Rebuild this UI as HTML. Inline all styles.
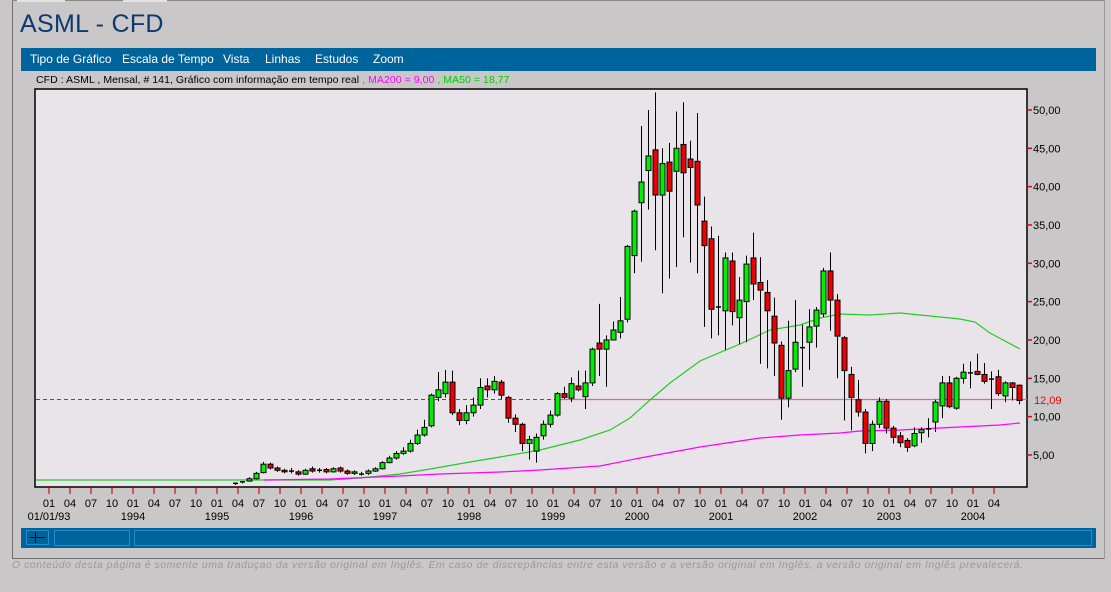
<!DOCTYPE html>
<html><head><meta charset="utf-8">
<style>
html,body{margin:0;padding:0;}
body{width:1111px;height:592px;background:#c9c7c7;position:relative;overflow:hidden;font-family:"Liberation Sans",sans-serif;}
.abs{position:absolute;}
#title{left:20px;top:10px;font-size:25px;color:#0d3a6e;letter-spacing:0.3px;}
#menu{left:21px;top:48px;width:1075px;height:23px;background:#00649c;}
#menu span{position:absolute;top:4px;color:#fff;font-size:12px;}
#info{left:36px;top:74px;font-size:10.5px;color:#000;white-space:nowrap;letter-spacing:0.05px;}
#foot{left:12px;top:559px;font-size:10.5px;color:#9a9898;font-style:italic;white-space:nowrap;letter-spacing:0.52px;}
</style></head><body>
<div class="abs" style="left:12px;top:0;width:1px;height:558px;background:#6e6e6e"></div>
<div class="abs" style="left:12px;top:558px;width:1092px;height:1px;background:#6e6e6e"></div>
<div class="abs" style="left:1104px;top:0;width:1px;height:559px;background:#9a9a9a"></div>
<div class="abs" style="left:12px;top:0;width:1092px;height:1px;background:#8a8a8a"></div>
<div class="abs" style="left:17px;top:0;width:48px;height:2px;background:#e4e4e4"></div>
<div class="abs" style="left:123px;top:0;width:44px;height:2px;background:#e4e4e4"></div>
<div id="title" class="abs">ASML - CFD</div>
<div id="menu" class="abs">
<span style="left:9px">Tipo de Gráfico</span>
<span style="left:101px">Escala de Tempo</span>
<span style="left:202px">Vista</span>
<span style="left:244px">Linhas</span>
<span style="left:294px">Estudos</span>
<span style="left:352px">Zoom</span>
</div>
<div id="info" class="abs">CFD : ASML , Mensal, # 141, Gráfico com informação em tempo real <span style="color:#ff00ff">, MA200 = 9,00</span> <span style="color:#00cc00">, MA50 = 18,77</span></div>
<svg class="abs" style="left:0;top:0" width="1111" height="592" id="svg" font-family="Liberation Sans, sans-serif"></svg>
<div class="abs" style="left:21px;top:528px;width:1075px;height:20px;background:#00649c"></div>
<div class="abs" style="left:26px;top:530px;width:23px;height:15px;border:1px solid #2a8ad0;box-sizing:border-box"></div>
<div class="abs" style="left:30px;top:537px;width:15px;height:1px;background:#000"></div>
<div class="abs" style="left:35px;top:532px;width:1px;height:11px;background:#000"></div>
<div class="abs" style="left:54px;top:530px;width:76px;height:16px;border:1px solid #2a8ad0;box-sizing:border-box"></div>
<div class="abs" style="left:134px;top:530px;width:958px;height:16px;border:1px solid #2a8ad0;box-sizing:border-box"></div>
<div id="foot" class="abs">O conteúdo desta página é somente uma traduçao da versão original em Inglês. Em caso de discrepâncias entre esta versão e a versão original em Inglês, a versão original em Inglês prevalecerá.</div>
<script>
var s='';
function Y(v){return 493.3-7.667*v;}
s+='<rect x="35" y="89" width="992" height="398" fill="#e9e4e9" stroke="#000" stroke-width="1.5"/>';
[5,10,15,20,25,30,35,40,45,50].forEach(function(v){var y=Y(v);
s+='<line x1="1027" x2="1032" y1="'+y+'" y2="'+y+'" stroke="#e00" stroke-width="1.5"/>';
s+='<text x="1033" y="'+(y+4)+'" font-size="11" fill="#000">'+v+',00</text>';});
var mm=['01','04','07','10'];
for(var j=0;j<=45;j++){var x=49+21*j;
s+='<line x1="'+x+'" x2="'+x+'" y1="488" y2="494" stroke="#e00" stroke-width="1.2"/>';
s+='<text x="'+x+'" y="507" font-size="11" text-anchor="middle">'+mm[j%4]+'</text>';
if(j%4==0){var yr=1993+j/4;s+='<text x="'+x+'" y="520" font-size="11" text-anchor="middle">'+(j==0?'01/01/93':yr)+'</text>';}}
s+='<line x1="36" x2="560" y1="399.5" y2="399.5" stroke="#555" stroke-dasharray="4,3"/>';
s+='<line x1="560" x2="1027" y1="399.5" y2="399.5" stroke="#e8609a" stroke-width="1.2"/>';
s+='<text x="1034" y="404" font-size="11" fill="#e00">12,09</text>';
function pl(pts,c){var p=pts.map(function(a){return a[0]+','+a[1]}).join(' ');s+='<polyline points="'+p+'" fill="none" stroke="'+c+'" stroke-width="1.2"/>';}
pl([[36,480],[330,480],[360,478],[400,474],[430,469],[470,462],[500,457],[540,450],[580,440],[610,430],[630,418],[650,400],[670,383],[700,361],[740,344],[770,330],[800,325],[820,318],[840,314],[870,315],[900,313],[930,316],[960,319],[975,322],[990,333],[1005,341],[1020,349]],'#22cc22');
pl([[264,480],[330,479],[400,476],[440,474],[500,472],[540,470],[600,466],[640,458],[700,447],[760,438],[800,435],[840,433],[860,431],[900,430],[940,428],[980,426],[1000,425],[1020,423]],'#ff00ff');
var pre=[[1.2,1.3,1.4,1.1],[1.4,1.5,1.6,1.3],[1.6,1.9,2.1,1.5],[1.9,2.6,2.8,1.8],[2.7,3.8,4.1,2.6],[3.8,3.3,4,3.1],[3.3,3.0,3.5,2.8],[3.0,2.8,3.2,2.6],[2.9,2.8,3.3,2.6],[2.8,2.5,3,2.3],[2.5,3.0,3.2,2.4],[3.2,2.9,3.5,2.7],[3.0,3.0,3.3,2.7],[3.1,2.8,3.3,2.6],[2.8,3.2,3.4,2.7],[3.3,2.9,3.5,2.7],[2.9,2.6,3.1,2.4],[2.6,2.8,3,2.4],[2.5,2.5,2.8,2.3],[2.6,2.9,3.1,2.4],[2.9,3.2,3.4,2.8],[3.2,4.0,4.2,3.1],[4.0,4.6,4.9,3.9],[4.6,5.2,5.5,4.4],[5.2,5.5,6,5],[5.5,6.5,7,5.3],[6.5,7.6,8.3,6.3],[7.6,8.6,9.6,7.4],[8.8,12.8,13,8.6],[12.5,13.5,15.8,12],[13,14.5,16.1,12.5],[14.5,10.5,16,10.2],[10.5,9.5,11,8.9],[9.5,10.5,11.5,9],[10.5,11.5,12.5,10],[11.5,13.8,15,11],[14,13.5,15,12.5],[13.5,14.6,15.3,13],[14.5,12.8,14.8,12.3],[12.5,9.8,12.7,9.2],[9.8,9,10.3,8],[9,6.5,9.2,5.5],[6.5,7,7.5,4.4],[5.5,7.3,7.8,4],[7.5,9,9.5,7],[9,10.2,10.8,8.6],[10.2,13,13.2,10]];
var mid=[[13,12.5,13.9,12.3],[12.4,14.3,15.1,11.9],[14,13.5,16,13.3],[12.6,14.4,16,11],[14.4,18.8,19,14],[19.6,18.8,24.7,15.3],[18.8,20,20.6,13.9],[20,21.3,22.4,20],[21,22.5,25.6,20.2],[22.7,32.2,32.4,22.3],[31,36.8,37,28.7],[37.9,40.6,47.9,30.2],[42.1,44,50,37],[44.8,38.9,52.3,31.7],[38.9,43,45,26.1],[43.2,39.4,45.7,28],[42,45,49.8,29.5],[45.5,41.8,51,33.4],[43.6,42.5,46,30.1],[43.3,37.6,49.6,28.7],[35.5,32.3,38.7,21.7],[33.2,24,34.8,20.2],[24.3,24.3,33.6,20.6],[23.8,30.7,31.4,18.7],[30.3,23.7,31.4,21.9],[22.9,25.2,28.2,19.4],[25,29.9,31,19.7],[30.7,27.3,34,25.2],[27.5,26.5,30.8,16.9],[26.2,23.8,27.8,16.3],[23.1,19.6,25.5,15.3],[19.3,12.4,19.8,9.6],[12.4,16,22.5,11.2],[16.2,19.7,25.2,15.8],[19,19,22,13.9],[19.7,21.7,24,16.1],[21.8,23.9,24.3,19],[23.4,29,29.4,23],[29,25.2,31.4,21.2],[25.2,20.5,26,15],[20.3,16,20.5,9.5],[15.5,12.5,16.5,8.2],[12.2,10.6,14.8,10],
[10.6,6.5,11,5.2],[6.5,9,9.5,5.5],[9,12,12.5,8.5],[12,8.5,12.3,7.8],[8.5,7.3,8.8,6.5],[7.5,6.6,8,6],[6.9,6,7.2,5.4],[6.2,7.8,8.6,6],[7.9,8.3,8.6,6.6],[8.4,8.4,9.8,7.3],[9.3,11.9,12.2,8],[11.4,14.4,15.3,9.8],[14.4,11.3,15.3,11.1],[11.1,15,15.2,10.9],[15,15.8,16.9,14.3],[15.7,15.7,17.2,13.7],[15.9,15.5,18.2,15.4],[15.5,14.6,17,14.3],[14.9,14.9,15.9,11],[15.2,13,16.1,12.7],[12.7,14.4,14.6,11.9],[14.4,13.8,14.5,12.1],[14.1,12.1,14.2,11.6]];
var all=pre.concat(mid);var x0=564-7*pre.length;
all.forEach(function(c,k){var x=x0+7*k;var o=c[0],cl=c[1];
s+='<line x1="'+(x+0.5)+'" x2="'+(x+0.5)+'" y1="'+Y(c[2])+'" y2="'+Y(c[3])+'" stroke="#000" stroke-width="1"/>';
var top=Y(Math.max(o,cl)),bot=Y(Math.min(o,cl));
if(bot-top<1.5){s+='<line x1="'+(x-2)+'" x2="'+(x+3)+'" y1="'+top+'" y2="'+top+'" stroke="#000" stroke-width="1.5"/>';}
else s+='<rect x="'+(x-2)+'" y="'+top+'" width="5" height="'+(bot-top)+'" fill="'+(cl>o?'#00ee00':'#ee0000')+'" stroke="#000" stroke-width="1"/>';});
document.getElementById('svg').innerHTML=s;
</script>
</body></html>
